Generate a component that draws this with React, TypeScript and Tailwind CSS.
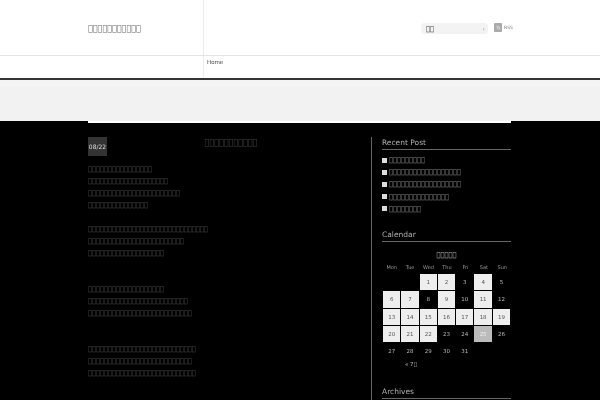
import React from 'react'

const box = (n: number) => '\uE000'.repeat(n)

const paragraphs = [
  {mt: 'mt-[7px]', lines: [16, 20, 23, 15]},
  {mt: 'mt-3', lines: [30, 24, 19]},
  {mt: 'mt-6', lines: [19, 25, 26]},
  {mt: 'mt-6', lines: [27, 26, 27]},
]

const recent = [9, 18, 18, 15, 8]

type Cell = {d: number; on?: boolean; today?: boolean} | null

const days: Cell[] = [
  null, null,
  {d: 1, on: true}, {d: 2, on: true}, {d: 3}, {d: 4, on: true}, {d: 5},
  {d: 6, on: true}, {d: 7, on: true}, {d: 8}, {d: 9, on: true}, {d: 10}, {d: 11, on: true}, {d: 12},
  {d: 13, on: true}, {d: 14, on: true}, {d: 15, on: true}, {d: 16, on: true}, {d: 17, on: true}, {d: 18, on: true}, {d: 19, on: true},
  {d: 20, on: true}, {d: 21, on: true}, {d: 22, on: true}, {d: 23}, {d: 24}, {d: 25, today: true}, {d: 26},
  {d: 27}, {d: 28}, {d: 29}, {d: 30}, {d: 31},
]

const SideTitle = ({children}: {children: React.ReactNode}) => (
  <h3 className="text-[7.5px] leading-[11px] text-[#b0b0b0] border-b border-[#666] pb-[1px]">{children}</h3>
)

export default function App() {
  return (
    <div className="h-[400px] w-[600px] overflow-hidden bg-white font-['DejaVu_Sans',sans-serif] will-change-transform">
      <header className="flex h-[56px] border-b border-[#e4e4e4]">
        <div className="w-[204px] border-r border-[#ececec] pl-[88px] pt-[22px]">
          <h1 className="text-[8px] leading-[14px] text-[#666]">{box(11)}</h1>
        </div>
        <div className="flex flex-1 pt-[23px] pl-[217px]">
          <div className="flex h-[11px] w-[67px] items-center justify-between rounded-[4px] bg-[#f3f3f3] pl-[5px] pr-[3px] text-[6.67px] text-[#333]">
            <span>{box(2)}</span>
            <span className="text-[6px] text-[#888]">›</span>
          </div>
          <div className="ml-[6px] flex h-[9px] w-[8px] items-center justify-center rounded-[1px] bg-[#aaa]">
            <svg width="5" height="5" viewBox="0 0 5 5" fill="none" stroke="#eee" strokeWidth="0.7">
              <path d="M0.5 1a3.5 3.5 0 0 1 3.5 3.5M0.5 2.7a1.8 1.8 0 0 1 1.8 1.8" />
            </svg>
          </div>
          <span className="ml-[2px] text-[4.5px] leading-[9px] text-[#777]">RSS</span>
        </div>
      </header>
      <nav className="flex h-[22px]">
        <div className="w-[204px] border-r border-[#ececec]" />
        <a className="pl-[3px] pt-[3px] text-[5.5px] leading-[7px] text-[#444]">Home</a>
      </nav>
      <div className="h-[2px] bg-[#333]" />
      <div className="h-[41px] bg-[#f2f2f2] border-t-[6px] border-[#f4f4f4]" />
      <main className="h-[280px] bg-black">
        <div className="ml-[88px] flex h-full w-[423px] border-t-2 border-white">
          <section className="w-[283px] pt-[14px]">
            <div className="flex">
              <div className="flex h-[19px] w-[19px] items-center justify-center bg-[#333] text-[6px] text-[#ddd]">08/22</div>
              <h2 className="w-[248px] pt-[1px] text-center text-[8px] leading-[10px] text-[#444]">{box(11)}</h2>
            </div>
            {paragraphs.map((p, i) => (
              <div key={i} className={p.mt}>
                {p.lines.map((n, j) => (
                  <p key={j} className="text-[6.67px] leading-[12px] text-[#484848]">{box(n)}</p>
                ))}
              </div>
            ))}
          </section>
          <aside className="mt-[14px] flex-1 border-l border-[#666] pl-[10px]">
            <SideTitle>Recent Post</SideTitle>
            <ul className="mt-[4px]">
              {recent.map((n, i) => (
                <li key={i} className="flex h-[12.2px] items-center text-[6.67px] text-[#888]">
                  <span className="mr-[2px] h-[5px] w-[5px] bg-[#ddd]" />
                  {box(n)}
                </li>
              ))}
            </ul>
            <div className="mt-[14px]">
              <SideTitle>Calendar</SideTitle>
            </div>
            <div className="mt-[9px] text-center text-[6.67px] leading-[9px] text-[#bbb]">{box(5)}</div>
            <div className="mt-[3px] grid grid-cols-7 gap-x-[1px] pl-[1px] text-center text-[5px] leading-[9px] text-[#999]">
              {['Mon', 'Tue', 'Wed', 'Thu', 'Fri', 'Sat', 'Sun'].map(d => <span key={d}>{d}</span>)}
            </div>
            <div className="mt-[2px] grid grid-cols-[repeat(7,17.3px)] auto-rows-[16.3px] gap-[1px] pl-[1px] text-[5.5px] text-[#bbb]">
              {days.map((c, i) => {
                if (!c) return <span key={i} />
                const bg = c.today ? 'bg-[#bbb] text-[#eee]' : c.on ? 'bg-[#eeeeee] text-[#555]' : ''
                return <span key={i} className={`flex items-center justify-center ${bg}`}>{c.d}</span>
              })}
            </div>
            <div className="mt-[1px] pl-[23px] text-[5.5px] leading-[9px] text-[#bbb]">« 7{box(1)}</div>
            <div className="mt-[17px]">
              <SideTitle>Archives</SideTitle>
            </div>
          </aside>
        </div>
      </main>
    </div>
  )
}
